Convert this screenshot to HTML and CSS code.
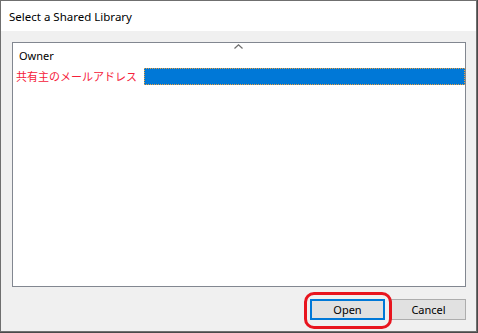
FILE: index.html
```html
<!DOCTYPE html>
<html>
<head>
<meta charset="utf-8">
<link rel="stylesheet" href="styles.css">
</head>
<body>
<div class="window">
  <div class="titlebar">Select a Shared Library</div>
  <div class="content">
    <div class="listbox">
      <div class="header">
        <span class="owner">Owner</span>
        <svg class="sort" width="9" height="5" viewBox="0 0 9 5"><path d="M0.5 4.5 L4.5 0.8 L8.5 4.5" fill="none" stroke="#6d6d6d" stroke-width="1.2"/></svg>
      </div>
      <div class="row">
        <span class="cell-name">共有主のメールアドレス</span>
        <span class="cell-sel"></span>
      </div>
    </div>
    <div class="buttons">
      <div class="btn-wrap">
        <button class="btn btn-default">Open</button>
        <div class="mark"></div>
      </div>
      <button class="btn">Cancel</button>
    </div>
  </div>
</div>
</body>
</html>
```
FILE: styles.css
```css
html, body {
  margin: 0;
  padding: 0;
}
body {
  width: 478px;
  height: 333px;
  background: #4a4a4a;
  font-family: "Noto Sans", "Noto Sans CJK JP", sans-serif;
  overflow: hidden;
}
.window {
  width: 475px;
  height: 330px;
  border: 1px solid #6f6f6f;
  background: #f0f0f0;
  display: flex;
  flex-direction: column;
}
.titlebar {
  height: 30px;
  background: #ffffff;
  font-size: 11.5px;
  line-height: 31px;
  padding-left: 8px;
  color: #000;
}
.content {
  flex: 1;
  padding: 11px 10px 0 11px;
  display: flex;
  flex-direction: column;
}
.listbox {
  height: 243px;
  border: 1px solid #828790;
  background: #ffffff;
  display: flex;
  flex-direction: column;
}
.header {
  height: 25px;
  position: relative;
  display: flex;
  align-items: center;
}
.owner {
  font-size: 11px;
  padding-left: 6px;
  color: #000;
}
.sort {
  position: absolute;
  left: 221px;
  top: 1px;
}
.row {
  height: 17px;
  display: flex;
  align-items: stretch;
}
.cell-name {
  width: 128px;
  padding-left: 3px;
  font-family: "Noto Sans CJK JP", sans-serif;
  font-size: 11px;
  line-height: 17px;
  color: #f5203a;
  white-space: nowrap;
}
.cell-sel {
  flex: 1;
  background: #0078d7;
  border: 1px dotted #e8a040;
}
.buttons {
  margin-top: 12px;
  display: flex;
  justify-content: flex-end;
  gap: 6px;
}
.btn-wrap {
  position: relative;
}
.btn {
  width: 75px;
  height: 21px;
  box-sizing: border-box;
  border: 1px solid #adadad;
  background: #e1e1e1;
  font-family: "Noto Sans", sans-serif;
  font-size: 11px;
  color: #000;
  padding: 0;
  display: block;
}
.btn-default {
  border: 2px solid #0078d7;
}
.mark {
  position: absolute;
  left: -6px;
  top: -7px;
  width: 82px;
  height: 31px;
  border: 3px solid #e8141e;
  border-radius: 10px;
}
```
